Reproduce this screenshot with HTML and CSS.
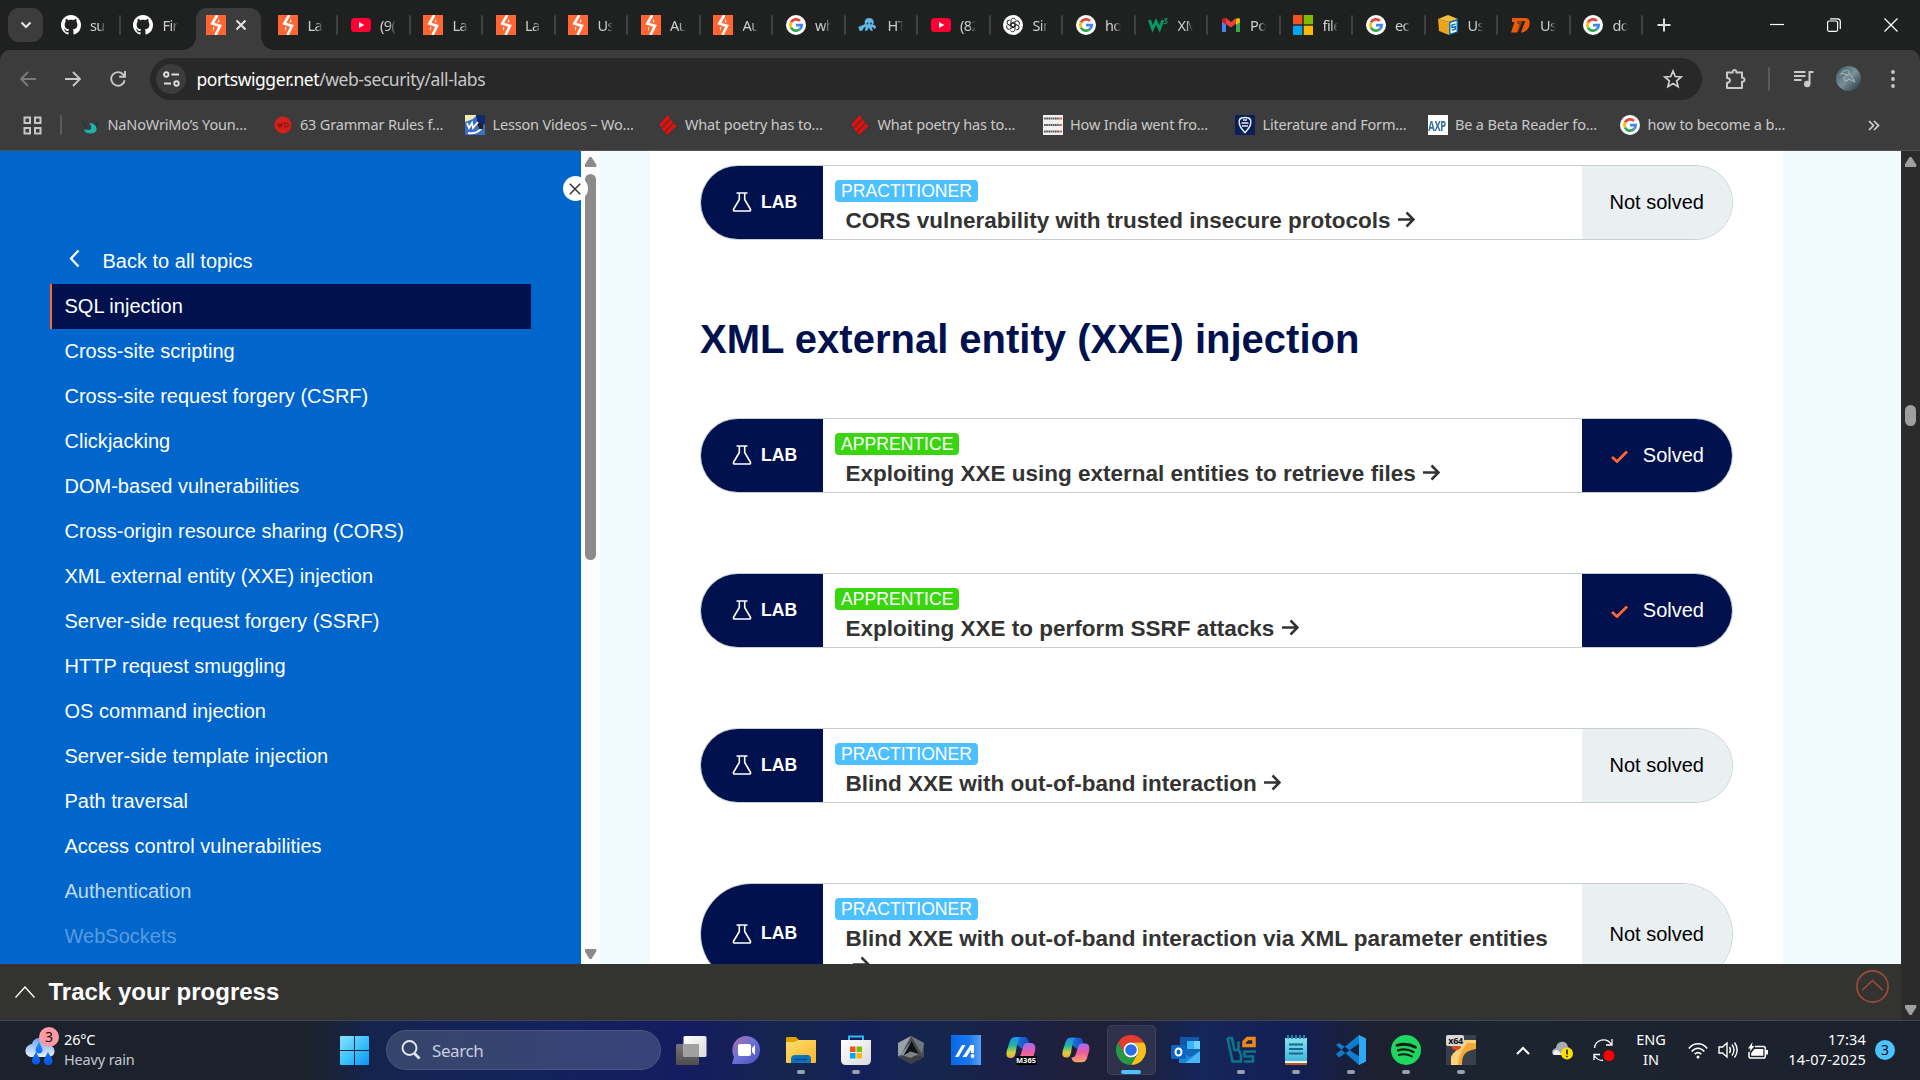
FILE: index.html
```html
<!DOCTYPE html>
<html lang="en">
<head>
<meta charset="utf-8">
<title>All labs | Web Security Academy</title>
<link rel="stylesheet" href="styles.css">
</head>
<body>
<svg class="defs" width="0" height="0" aria-hidden="true">
  <defs>
    <linearGradient id="winG" x1="0" y1="0" x2="1" y2="1"><stop offset="0" stop-color="#8ae3ff"/><stop offset=".5" stop-color="#3fc4fb"/><stop offset="1" stop-color="#0a93f5"/></linearGradient>
    <linearGradient id="cloudG" x1="0" y1="0" x2="0" y2="1"><stop offset="0" stop-color="#6aa5ff"/><stop offset="1" stop-color="#e9effc"/></linearGradient>
    <linearGradient id="dropG" x1="0" y1="0" x2="0" y2="1"><stop offset="0" stop-color="#1d8dff"/><stop offset="1" stop-color="#0653e6"/></linearGradient>
    <linearGradient id="greyG" x1="0" y1="0" x2="0" y2="1"><stop offset="0" stop-color="#777"/><stop offset="1" stop-color="#4d4d4d"/></linearGradient>
    <linearGradient id="whiteG" x1="0" y1="0" x2="1" y2="1"><stop offset="0" stop-color="#fff"/><stop offset="1" stop-color="#d9d9de"/></linearGradient>
    <linearGradient id="chatG" x1="0" y1="0" x2="1" y2="1"><stop offset="0" stop-color="#b768a8"/><stop offset=".45" stop-color="#6d72d4"/><stop offset="1" stop-color="#4a52c4"/></linearGradient>
    <linearGradient id="foldG" x1="0" y1="0" x2="1" y2="1"><stop offset="0" stop-color="#ffdc6e"/><stop offset="1" stop-color="#fbb92c"/></linearGradient>
    <linearGradient id="copA" x1="0" y1="0" x2="0" y2="1"><stop offset="0" stop-color="#1d8ef0"/><stop offset=".4" stop-color="#22b5a0"/><stop offset=".75" stop-color="#d6d33a"/><stop offset="1" stop-color="#f5a53c"/></linearGradient>
    <linearGradient id="copB" x1="0" y1="0" x2="0" y2="1"><stop offset="0" stop-color="#a26bf3"/><stop offset=".5" stop-color="#ef5c9c"/><stop offset="1" stop-color="#fca463"/></linearGradient>
    <linearGradient id="copC" x1="0" y1="0" x2="1" y2="0"><stop offset="0" stop-color="#1c7ae8"/><stop offset="1" stop-color="#1546b4"/></linearGradient>
    <linearGradient id="asusG" x1="0" y1="0" x2="1" y2="0"><stop offset="0" stop-color="#0768e6"/><stop offset=".6" stop-color="#1a78ea"/><stop offset="1" stop-color="#5d9ff2"/></linearGradient>
    <linearGradient id="noteG" x1="0" y1="0" x2="0" y2="1"><stop offset="0" stop-color="#86dff2"/><stop offset="1" stop-color="#3db7da"/></linearGradient>
    <linearGradient id="avG" x1="0" y1="0" x2="1" y2="1"><stop offset="0" stop-color="#3d5963"/><stop offset=".5" stop-color="#7b9098"/><stop offset="1" stop-color="#1d2f38"/></linearGradient>
  </defs>
  <symbol id="github" viewBox="0 0 16 16"><path fill="#fff" d="M8 0C3.58 0 0 3.58 0 8c0 3.54 2.29 6.53 5.47 7.59.4.07.55-.17.55-.38 0-.19-.01-.82-.01-1.49-2.01.37-2.53-.49-2.69-.94-.09-.23-.48-.94-.82-1.13-.28-.15-.68-.52-.01-.53.63-.01 1.08.58 1.23.82.72 1.21 1.87.87 2.33.66.07-.52.28-.87.51-1.07-1.78-.2-3.64-.89-3.64-3.95 0-.87.31-1.59.82-2.15-.08-.2-.36-1.02.08-2.12 0 0 .67-.21 2.2.82.64-.18 1.32-.27 2-.27s1.36.09 2 .27c1.53-1.04 2.2-.82 2.2-.82.44 1.1.16 1.92.08 2.12.51.56.82 1.27.82 2.15 0 3.07-1.87 3.75-3.65 3.95.29.25.54.73.54 1.48 0 1.07-.01 1.93-.01 2.2 0 .21.15.46.55.38A8.01 8.01 0 0 0 16 8c0-4.42-3.58-8-8-8z"/></symbol>
  <symbol id="ps" viewBox="0 0 20 20"><path fill="#f63" d="M0 0h20v20H0z"/><path fill="none" stroke="#fff" stroke-width="2.600" d="M11.300 0 6.300 8.600 14 10.900 9.500 20"/><path fill="#fff" d="M13 3.500 11.500 7l1.800.5zM7 12l1.500.5L7 16z"/></symbol>
  <symbol id="yt" viewBox="0 0 20 20"><rect y="3" width="20" height="14" rx="3.600" fill="#ff0033"/><path fill="#fff" d="m8 7 5.300 3L8 13z"/></symbol>
  <symbol id="google" viewBox="0 0 20 20"><circle cx="10" cy="10" r="10" fill="#fff"/><g fill="none" stroke-width="2.700"><path stroke="#ea4335" d="M14 5.900A5.700 5.700 0 0 0 5 7.300"/><path stroke="#fbbc04" d="M5 7.300a5.700 5.700 0 0 0 0 5.400"/><path stroke="#34a853" d="M5 12.700a5.700 5.700 0 0 0 8.700 1.600"/><path stroke="#4285f4" d="M13.700 14.300a5.700 5.700 0 0 0 2-4.100H10"/></g></symbol>
  <symbol id="octo" viewBox="0 0 20 20"><path fill="#5fb8e6" d="M11 3c4 0 6 3.500 4 7 2 0 3 .5 3 3l-2 1c-.3-1.500-1-2-2.300-1.700L15 16l-2.500-.5-1.700-3-1.300 3L7 16l.5-4c-1.500 0-2 1.500-3 3.500L1.500 16 .3 12c1.500-.5 3-1.500 4.700-2l2-1C6 6 7.500 3 11 3z"/><circle cx="9.500" cy="8.500" r="1" fill="#1d3b4d"/><circle cx="13" cy="8.500" r="1" fill="#1d3b4d"/></symbol>
  <symbol id="gpt" viewBox="0 0 20 20"><circle cx="10" cy="10" r="10" fill="#fff"/><g fill="none" stroke="#222" stroke-width="1"><g id="petal"><path d="M8 7.200V5.600C8 3 11.400 2.500 12.700 4.600M8 7.200v3.900l3.300 1.900"/></g><use href="#petal" transform="rotate(60 10 10)"/><use href="#petal" transform="rotate(120 10 10)"/><use href="#petal" transform="rotate(180 10 10)"/><use href="#petal" transform="rotate(240 10 10)"/><use href="#petal" transform="rotate(300 10 10)"/></g></symbol>
  <symbol id="w3" viewBox="0 0 20 20"><path fill="none" stroke="#059862" stroke-width="2.900" d="m1.400 5 3.200 9L8 6.500l3.600 7.500 3.200-9"/><path fill="none" stroke="#059862" stroke-width="1.100" d="M16 3.700h3l-1.700 2c2.500 0 2 2.900-.2 2.800l-1.100-.5"/></symbol>
  <symbol id="gmail" viewBox="0 0 20 20"><path fill="#4285f4" d="M1 5v12h4V9z"/><path fill="#34a853" d="M19 5v12h-4V9z"/><path fill="#ea4335" d="M1 5.200 5 3l5 4 5-4v5.500L10 12.500 1 6.500z"/><path fill="#fbbc04" d="M15 4.200c2-2 4-1 4 1V7l-4 3z"/><path fill="#c5221f" d="M1 5.200C1 3.200 3.500 2.200 5 4v5.500L1 6.800z"/></symbol>
  <symbol id="ms" viewBox="0 0 20 20"><path fill="#f25022" d="M0 0h9.300v9.300H0z"/><path fill="#7fba00" d="M10.700 0H20v9.300h-9.300z"/><path fill="#00a4ef" d="M0 10.700h9.300V20H0z"/><path fill="#ffb900" d="M10.700 10.700H20V20h-9.300z"/></symbol>
  <symbol id="box" viewBox="0 0 20 20"><path fill="#f5bd3d" d="m0 4 10-4 10 4-9 3z"/><path fill="#eba41c" d="m0 4 11 3v13L1 16z"/><path fill="#0b75bd" d="m11 7 9-3v13l-9 3z"/><path fill="#fff" d="m12.500 8 6-2v10.500l-6 2z"/><path fill="none" stroke="#0b75bd" stroke-width="1.500" d="m17.500 9-3.500 1v2.500l3.300-.8v2.500l-3.500 1"/></symbol>
  <symbol id="seven" viewBox="0 0 20 20"><path fill="#eb5a0c" d="M1 3h13c3.500 0 5 2 4.700 6-.4 4.500-3 8-8.700 8.500l1.500-4.500 2-6.500H9L6 17.500H0L3.500 7H1z"/><path fill="#1f2020" d="M6.500 6.300h7.800L11 13.500l-1.500 2H7.200l3-6.500H6z"/><path fill="#eb5a0c" d="m7 6.300 4.500 0-4.500 11H1z" opacity=".55"/></symbol>
  <symbol id="dragon" viewBox="0 0 20 20"><path fill="#24383f" d="m0 4 7 6v5zM20 3l-6 8 2 5z"/><path fill="#1fb5ae" d="M9 8c5 0 8 3 7.500 7-.5 4-9 4.500-11.500 1.500L4 14.500l5 .5c3 0 3-4 0-7z"/></symbol>
  <symbol id="wd" viewBox="0 0 20 20"><circle cx="10" cy="10" r="8.500" fill="#d32119"/><path fill="none" stroke="#8a1611" stroke-width="1.100" d="m4.500 8 1.200 4 1.300-3 1.300 3 1.200-4m2 0v4c5 1 5-5 0-4"/></symbol>
  <symbol id="lesson" viewBox="0 0 20 20"><path fill="#3d6fc0" d="M0 0h20v20H0z"/><path fill="#f0e9b8" d="M0 0h12L8 4 0 7z"/><path fill="#102a70" d="M11 0h9v9l-7 2z"/><path stroke="#fff" stroke-width="1.800" fill="none" d="m2 8 2 5 3-5 1 5 5-6M3 18c7 1 10-1 14-5"/><path fill="#2a1a18" d="M13 9h5v5h-4z"/></symbol>
  <symbol id="poetry" viewBox="0 0 20 20"><path fill="#f00a0a" d="M9.800.3 12 3.300 3.300 12.500 1.500 9.500zM13 4.500l2 3L6 17l-2-3.500zM16.200 8.200l2 2.800-8.700 8.700-2-2.500z"/></symbol>
  <symbol id="india" viewBox="0 0 20 20"><path fill="#f3f1f0" d="M0 0h20v20H0z"/><g stroke-width="2.200" stroke-dasharray="1.700 .5"><path stroke="#555" d="M1 3.500h14M1 10h14M1 16.500h14"/><path stroke="#b55" d="M15 3.500h4M15 10h4M15 16.500h4"/></g></symbol>
  <symbol id="lit" viewBox="0 0 20 20"><path fill="#0b1f57" d="M0 0h20v20H0z"/><path fill="none" stroke="#e8ecf5" stroke-width="1.500" d="M10 2.500c6 0 6.500 3 5.500 7-.8 3.500-3 5-5.500 8-2.500-3-4.700-4.500-5.500-8-1-4-.5-7 5.500-7zM6.500 8h7M7 11h6M8 5h4"/></symbol>
  <symbol id="lab" viewBox="0 0 20 20"><path fill="none" stroke="#fff" stroke-width="1.600" stroke-linejoin="round" d="M4.500 1h11M7.300 1v6.500L1.700 17c-.7 1.300 0 2 1 2h14.600c1 0 1.700-.7 1-2l-5.600-9.500V1"/></symbol>
  <symbol id="arrow" viewBox="0 0 17 17"><path fill="none" stroke="#333332" stroke-width="2.500" d="M0 8.500h15M8.500 1.500l7 7-7 7"/></symbol>
  <symbol id="copilot" viewBox="0 0 30 30"><path fill="url(#copC)" d="M9 2h9c3 0 4 2 5 5l1 3h-6l-2 4-7-6z"/><path fill="url(#copA)" d="M9 2h5c-2 2-3 8-4 14-.8 5-2 7-5 7H4c-4 0-4-4-3-8l3-9c1-3 3-4 5-4z"/><path fill="url(#copB)" d="M21 28h-6c-3 0-4-2-5-5 3 0 4-1 5-4l2-7c.7-2.500 2-4 4-4h4c4 0 5 4 4 8l-2 7c-1.200 4-3 5-6 5z"/></symbol>
</svg>

<header class="tabs">
  <button class="tab-search"><svg width="12" height="12" viewBox="0 0 12 12"><path d="m1.500 3.500 4.500 4.500 4.500-4.500" fill="none" stroke="#e3e3e3" stroke-width="2.200"/></svg></button>
  <div class="strip">
    <div class="tab"><svg><use href="#github"/></svg><span>su</span></div>
    <div class="tab nosep"><svg><use href="#github"/></svg><span>Fir</span></div>
    <div class="tab active nosep"><svg><use href="#ps"/></svg><svg class="x" viewBox="0 0 12 12"><path d="m1.500 1.500 9 9m0-9-9 9" stroke="#e3e3e3" stroke-width="2"/></svg></div>
    <div class="tab"><svg><use href="#ps"/></svg><span>La</span></div>
    <div class="tab"><svg><use href="#yt"/></svg><span>(9(</span></div>
    <div class="tab"><svg><use href="#ps"/></svg><span>La</span></div>
    <div class="tab"><svg><use href="#ps"/></svg><span>La</span></div>
    <div class="tab"><svg><use href="#ps"/></svg><span>Us</span></div>
    <div class="tab"><svg><use href="#ps"/></svg><span>Au</span></div>
    <div class="tab"><svg><use href="#ps"/></svg><span>Au</span></div>
    <div class="tab"><svg><use href="#google"/></svg><span>wh</span></div>
    <div class="tab"><svg><use href="#octo"/></svg><span>HT</span></div>
    <div class="tab"><svg><use href="#yt"/></svg><span>(82</span></div>
    <div class="tab"><svg><use href="#gpt"/></svg><span>Sin</span></div>
    <div class="tab"><svg><use href="#google"/></svg><span>ho</span></div>
    <div class="tab"><svg><use href="#w3"/></svg><span>XM</span></div>
    <div class="tab"><svg><use href="#gmail"/></svg><span>Po</span></div>
    <div class="tab"><svg><use href="#ms"/></svg><span>file</span></div>
    <div class="tab"><svg><use href="#google"/></svg><span>ec</span></div>
    <div class="tab"><svg><use href="#box"/></svg><span>Us</span></div>
    <div class="tab"><svg><use href="#seven"/></svg><span>Us</span></div>
    <div class="tab"><svg><use href="#google"/></svg><span>do</span></div>
  </div>
  <svg class="newtab" width="14" height="14" viewBox="0 0 14 14"><path d="M7 .5v13M.5 7h13" stroke="#dcdcdc" stroke-width="2"/></svg>
  <div class="winbtns">
    <svg width="14" height="14" viewBox="0 0 14 14"><path d="M0 6.500h14" stroke="#fff" stroke-width="1.200"/></svg>
    <svg width="14" height="14" viewBox="0 0 14 14" fill="none" stroke="#fff" stroke-width="1.200"><rect x=".6" y="3" width="10" height="10.300" rx="1.500"/><path d="M3 .8h7.500c2 0 2.800 1 2.800 2.800V11"/></svg>
    <svg width="14" height="14" viewBox="0 0 14 14"><path d="m.5.500 13 13m0-13-13 13" stroke="#fff" stroke-width="1.300"/></svg>
  </div>
</header>

<div class="toolbar">
  <nav class="navbtns">
    <svg width="16" height="16" viewBox="0 0 16 16"><path d="M16 8H1.500M8 1 1 8l7 7" fill="none" stroke="#7b7b7b" stroke-width="1.900"/></svg>
    <svg width="16" height="16" viewBox="0 0 16 16"><path d="M0 8h14.500M8 1l7 7-7 7" fill="none" stroke="#c9c9c9" stroke-width="1.900"/></svg>
    <svg width="16" height="16" viewBox="0 0 16 16"><path d="M14.700 9.300A6.800 6.800 0 1 1 13 3.300l1.800 1.700M15 0v5.800H9.200" fill="none" stroke="#c9c9c9" stroke-width="1.900"/></svg>
  </nav>
  <div class="omnibox">
    <span class="site"><svg width="17" height="16" viewBox="0 0 17 16" fill="none" stroke="#dedede" stroke-width="1.900"><circle cx="3.200" cy="3.500" r="2.200"/><path d="M8.500 3.500H16M1 12.500h7"/><circle cx="13.500" cy="12.500" r="2.200"/></svg></span>
    <span class="url"><b>portswigger.net</b>/web-security/all-labs</span>
    <svg class="star" width="20" height="20" viewBox="0 0 20 20"><path d="m10 2 2.300 5.500 5.900.5-4.500 3.900 1.400 5.800-5.100-3.100-5.100 3.100 1.400-5.800L1.800 8l5.900-.5z" fill="none" stroke="#d0d0d0" stroke-width="1.700"/></svg>
  </div>
  <div class="actions">
    <svg width="22" height="22" viewBox="0 0 22 22"><path d="M2 4.500h5.800c-.6-3.500 4-3.500 3.600 0H17v5.300c3.400-.5 3.400 4.400 0 3.900V20H2v-5.300c4 .3 4-5 0-4.700z" fill="none" stroke="#c9c9c9" stroke-width="2" stroke-linejoin="round"/></svg>
    <i class="bar"></i>
    <svg width="20" height="18" viewBox="0 0 20 18"><path d="M0 2h11.500M0 6h11.500M0 10h7.500" stroke="#c9c9c9" stroke-width="2"/><path d="M15.500 14V2h4" stroke="#c9c9c9" stroke-width="2" fill="none"/><circle cx="13.200" cy="14" r="3.200" fill="#c9c9c9"/></svg>
    <svg width="25" height="25" viewBox="0 0 25 25"><circle cx="12.500" cy="12.500" r="12.500" fill="url(#avG)"/><path d="M4 9c3-5 8-6 9-3s-4 3-5 6 3 4 5 1l6 3M5 7l7 2M12 8c3 0 4 3 7 8" fill="none" stroke="#a9bbc0" stroke-width="1"/></svg>
    <svg width="4" height="18" viewBox="0 0 4 18" fill="#c9c9c9"><circle cx="2" cy="2" r="1.900"/><circle cx="2" cy="9" r="1.900"/><circle cx="2" cy="16" r="1.900"/></svg>
  </div>
</div>

<div class="bookmarks">
  <svg class="apps" width="19" height="19" viewBox="0 0 19 19" fill="none" stroke="#c7c7c7" stroke-width="2"><path d="M1.500 1.500h5.500v5.500H1.500zM12 1.500h5.500v5.500H12zM1.500 12h5.500v5.500H1.500zM12 12h5.500v5.500H12z"/></svg>
  <i class="bar"></i>
  <div class="marks">
    <a><svg><use href="#dragon"/></svg><span>NaNoWriMo’s Youn...</span></a>
    <a><svg><use href="#wd"/></svg><span>63 Grammar Rules f...</span></a>
    <a><svg><use href="#lesson"/></svg><span>Lesson Videos – Wo...</span></a>
    <a><svg><use href="#poetry"/></svg><span>What poetry has to...</span></a>
    <a><svg><use href="#poetry"/></svg><span>What poetry has to...</span></a>
    <a><svg><use href="#india"/></svg><span>How India went fro...</span></a>
    <a><svg><use href="#lit"/></svg><span>Literature and Form...</span></a>
    <a><b class="axp"><i>AXP</i></b><span>Be a Beta Reader fo...</span></a>
    <a><svg><use href="#google"/></svg><span>how to become a b...</span></a>
  </div>
  <svg class="more" width="12" height="11" viewBox="0 0 12 11"><path d="m1 1 4.500 4.500L1 10M6 1l4.500 4.500L6 10" fill="none" stroke="#d0d0d0" stroke-width="1.700"/></svg>
</div>

<div class="viewport">
  <div class="page">
    <div class="main">
      <aside class="side">
        <button class="close"><svg width="12" height="12" viewBox="0 0 12 12"><path d="m.8.800 10.400 10.400m0-10.400L.8 11.200" stroke="#333" stroke-width="1.500"/></svg></button>
        <a class="back"><svg width="11" height="19" viewBox="0 0 11 19"><path d="M9.500 1.500 2 9.500l7.500 8" fill="none" stroke="#fff" stroke-width="2.300"/></svg>Back to all topics</a>
        <a class="topic current">SQL injection</a>
        <a class="topic">Cross-site scripting</a>
        <a class="topic">Cross-site request forgery (CSRF)</a>
        <a class="topic">Clickjacking</a>
        <a class="topic">DOM-based vulnerabilities</a>
        <a class="topic">Cross-origin resource sharing (CORS)</a>
        <a class="topic">XML external entity (XXE) injection</a>
        <a class="topic">Server-side request forgery (SSRF)</a>
        <a class="topic">HTTP request smuggling</a>
        <a class="topic">OS command injection</a>
        <a class="topic">Server-side template injection</a>
        <a class="topic">Path traversal</a>
        <a class="topic">Access control vulnerabilities</a>
        <a class="topic fade1">Authentication</a>
        <a class="topic fade2">WebSockets</a>
      </aside>
      <div class="scroll light"><i class="up"></i><i class="thumb"></i><i class="down"></i></div>
      <section class="content">
        <article class="card">
          <div class="kind"><svg><use href="#lab"/></svg>LAB</div>
          <div class="info"><span class="tag practitioner">PRACTITIONER</span><h3>CORS vulnerability with trusted insecure protocols<svg><use href="#arrow"/></svg></h3></div>
          <div class="status">Not solved</div>
        </article>
        <h2>XML external entity (XXE) injection</h2>
        <article class="card">
          <div class="kind"><svg><use href="#lab"/></svg>LAB</div>
          <div class="info"><span class="tag apprentice">APPRENTICE</span><h3>Exploiting XXE using external entities to retrieve files<svg><use href="#arrow"/></svg></h3></div>
          <div class="status solved"><svg viewBox="0 0 17 13"><path d="m1 7 5 4.500L16 1.500" fill="none" stroke="#f63" stroke-width="2.800"/></svg>Solved</div>
        </article>
        <article class="card">
          <div class="kind"><svg><use href="#lab"/></svg>LAB</div>
          <div class="info"><span class="tag apprentice">APPRENTICE</span><h3>Exploiting XXE to perform SSRF attacks<svg><use href="#arrow"/></svg></h3></div>
          <div class="status solved"><svg viewBox="0 0 17 13"><path d="m1 7 5 4.500L16 1.500" fill="none" stroke="#f63" stroke-width="2.800"/></svg>Solved</div>
        </article>
        <article class="card">
          <div class="kind"><svg><use href="#lab"/></svg>LAB</div>
          <div class="info"><span class="tag practitioner">PRACTITIONER</span><h3>Blind XXE with out-of-band interaction<svg><use href="#arrow"/></svg></h3></div>
          <div class="status">Not solved</div>
        </article>
        <article class="card tall">
          <div class="kind"><svg><use href="#lab"/></svg>LAB</div>
          <div class="info"><span class="tag practitioner">PRACTITIONER</span><h3>Blind XXE with out-of-band interaction via XML parameter entities<svg><use href="#arrow"/></svg></h3></div>
          <div class="status">Not solved</div>
        </article>
      </section>
    </div>
    <footer class="track">
      <svg width="20" height="12" viewBox="0 0 20 12"><path d="m.5 11.500 9.500-10.500 9.500 10.500" fill="none" stroke="#fff" stroke-width="1.300"/></svg>
      <strong>Track your progress</strong>
      <svg class="totop" width="33" height="33" viewBox="0 0 33 33" fill="none" stroke="#a24d31" stroke-width="1.600"><circle cx="16.500" cy="16.500" r="15.600"/><path d="m6.500 20 10-9.500 10 9.500"/></svg>
    </footer>
  </div>
  <div class="scroll dark"><i class="up"></i><i class="thumb"></i><i class="down"></i></div>
</div>

<footer class="taskbar">
  <div class="weather">
    <div class="wicon"><svg width="30" height="32" viewBox="0 0 30 32"><path fill="url(#cloudG)" d="M7 11c2-8 14-8 16 1 8 0 9 11 1 12H6c-8-1-7-12 1-13z"/><path fill="url(#dropG)" d="M14 9c2 4 3.500 6 3.500 8a3.500 3.500 0 0 1-7 0c0-2 1.500-4 3.500-8zM11 19c2 4 4 6 4 8.500a4 4 0 0 1-8 0C7 25 9 23 11 19zM23 19c2 4 4.500 6 4.500 9a4.300 4.300 0 0 1-8.600 0c0-3 2-5 4.100-9z"/></svg><b>3</b></div>
    <p>26°C<br><em>Heavy rain</em></p>
  </div>
  <div class="apps-row">
    <div class="app start"><svg width="29" height="29" viewBox="0 0 29 29" fill="url(#winG)"><path d="M1 0h13v14H0V1q0-1 1-1zM15 0h13q1 0 1 1v13H15zM0 15h14v14H1q-1 0-1-1zM15 15h14v13q0 1-1 1H15z"/></svg></div>
    <div class="search"><svg width="20" height="20" viewBox="0 0 20 20" fill="none" stroke="#e6e8f0"><circle cx="8.500" cy="8" r="7" stroke-width="1.900"/><path d="m13.500 13.500 5 5" stroke-width="2.600"/></svg>Search</div>
    <div class="app"><svg width="31" height="29" viewBox="0 0 31 29"><rect y="8" width="23" height="21" rx="1.500" fill="url(#greyG)"/><rect x="7.500" width="23" height="21" rx="1.500" fill="url(#whiteG)"/><path fill="#a0a0a0" d="M7.500 8H23v13H7.500z"/></svg></div>
    <div class="app"><svg width="30" height="30" viewBox="0 0 30 30"><path fill="url(#chatG)" d="M15 1a14 14 0 1 1 0 28H1l2-7C-2 12 5 1 15 1z"/><rect x="7" y="9" width="13" height="12" rx="2" fill="#fff"/><path fill="#fff" d="m21 13 3-3v10l-3-3z"/></svg></div>
    <div class="app open"><svg width="31" height="28" viewBox="0 0 31 28"><path fill="#e0a100" d="M1 1h9l3 3h-1L8 8H0V2z"/><path fill="url(#foldG)" d="M0 6h8l4-2h18v22q0 1-1 1H1q-1 0-1-1z"/><path fill="#0f72bd" d="M5 27v-4q0-4 4-4h12q4 0 4 4v4z"/><path stroke="#0a4b86" stroke-width="1.500" d="M9 23.500h12"/></svg></div>
    <div class="app open"><svg width="30" height="30" viewBox="0 0 30 30"><path fill="none" stroke="#2bbdf0" stroke-width="2" d="M8 6V1.500h14V6"/><path fill="url(#whiteG)" d="M0 5h30v20q0 5-5 5H5q-5 0-5-5z"/><path fill="#f25022" d="M9 11.500h5.500V17H9z"/><path fill="#7fba00" d="M15.500 11.500H21V17h-5.500z"/><path fill="#00a4ef" d="M9 18h5.500v5.500H9z"/><path fill="#ffb900" d="M15.500 18H21v5.500h-5.500z"/></svg></div>
    <div class="app"><svg width="28" height="30" viewBox="0 0 28 30"><path fill="#474c53" d="m14 1 13 7v14l-13 7-13-7V8z"/><path fill="#70767e" d="m14 1 13 7-2 11z"/><path fill="#9aa0a8" d="m14 1-13 7v13l3-1z"/><path fill="#3b3f45" d="m1 22 4-1h17l5 1-13 7z"/><path fill="#0e1012" d="m14.500 6 7 13-8-2.500-7 4z"/><path fill="#8d939b" d="m14.500 6-11 14 3 .5z"/><path fill="#7d838b" d="m6.500 20.500 7-4 8 2.500-8 4z"/></svg></div>
    <div class="app"><svg width="30" height="30" viewBox="0 0 30 30"><path fill="url(#asusG)" d="M0 0h30v30H0z"/><path fill="#fff" d="m4 22 7-12h3.500L7.500 22zM11.500 22l8-12h3.500v8h-3v-3l-4.500 7z"/><circle cx="21.500" cy="21" r="1.900" fill="#fff"/></svg></div>
    <div class="app"><svg width="30" height="30" viewBox="0 0 30 30"><use href="#copilot"/></svg><b class="m365">M365</b></div>
    <div class="app"><svg width="28" height="28" viewBox="0 0 30 30"><use href="#copilot"/></svg></div>
    <div class="app focus"><svg width="30" height="30" viewBox="0 0 30 30"><path fill="#e33b2e" d="M2 7.500a15 15 0 0 1 26 0H15a7.500 7.500 0 0 0-6.500 11.200z"/><path fill="#fbc116" d="M28 7.500A15 15 0 0 1 15 30l6.500-11.200A7.500 7.500 0 0 0 15 7.500z"/><path fill="#279847" d="M2 7.500 8.500 18.700A7.500 7.500 0 0 0 21.500 18.700L15 30A15 15 0 0 1 2 7.500z"/><circle cx="15" cy="15" r="7.500" fill="#fff"/><circle cx="15" cy="15" r="5.800" fill="#2b6de9"/></svg></div>
    <div class="app"><svg width="30" height="28" viewBox="0 0 30 28"><path fill="#0f5aa8" d="M9 1h19v12H9z"/><path fill="#38b6f5" d="M16 5h7v8h-7z"/><path fill="#6bd4ff" d="M23 5h6v8h-6z"/><path fill="#1b86dc" d="M8 13h21v14H8z"/><path fill="#1464b8" d="m8 14 11 7 10-6v-2H8z"/><path fill="#48b4f2" d="m29 15-15 12h15z"/><rect y="9" width="15" height="14" rx="1.500" fill="#0c65be"/><ellipse cx="7.500" cy="16" rx="3" ry="3.500" fill="none" stroke="#fff" stroke-width="2"/></svg></div>
    <div class="app open"><svg width="30" height="28" viewBox="0 0 30 28" fill="none" stroke-width="2.600"><path stroke="#0c7686" d="M1.500 2H6l2.500 12h4V5.500M1.500 2l5 23.500H15V19l-2-4.500M30 15.500H18.500v5H27v5h-9"/><path stroke="#f08a14" stroke-width="3.500" d="M18 9.500V6l3.500-3.500H28v7z"/></svg></div>
    <div class="app open"><svg width="24" height="30" viewBox="0 0 24 30"><path fill="url(#noteG)" d="M1 3h22v24H1z"/><path fill="#f0f0ee" d="M1 26h22v2H1z"/><path fill="#b35a1e" d="M1 28h22v2H1z"/><path stroke="#17698a" stroke-width="2" d="M5 9.500h14M5 14h14M5 18.500h14"/><path stroke="#2a8fb0" stroke-width="1.800" d="M4 0v4M8 0v4M12 0v4M16 0v4M20 0v4"/></svg></div>
    <div class="app open"><svg width="31" height="30" viewBox="0 0 31 30"><path fill="#0f7dcc" d="M23 0 0 19l3 3.500L24 8zM0 10l3-2 21 14-1 8z"/><path fill="#2da8f5" d="m23 0 7 3.500v23L23 30z"/></svg></div>
    <div class="app open"><svg width="30" height="30" viewBox="0 0 30 30"><circle cx="15" cy="15" r="15" fill="#1ed760"/><g fill="none" stroke="#121c16" stroke-linecap="round"><path stroke-width="2.800" d="M6 10.300c6-1.700 13-1.200 18.500 1.900"/><path stroke-width="2.300" d="M7 15.300c5-1.400 11-.9 15.500 1.700"/><path stroke-width="2" d="M7.800 19.900c4.500-1.100 9-.7 13 1.500"/></g></svg></div>
    <div class="app open"><svg width="30" height="30" viewBox="0 0 30 30"><path fill="#3a404a" d="M0 0h30v30H0z"/><path fill="#f5a73a" d="M30 5H20c-3 0-4 1-6 4-2 8-8 8-9 14v7h11c0-8 2-12 7-14 3-1 5-2 7-2z"/><path fill="#fbd27a" d="M30 5v3h-9c-3 5-8 10-9 22H5v-7c1-6 7-6 9-13 2-4 4-5 6-5z"/><path fill="#df4a1a" d="M5 11h10c0 5-8 6-10 0z"/><rect width="18" height="11" rx="2" fill="#d8d8d6"/></svg><b class="x64">x64</b></div>
  </div>
  <div class="tray">
    <svg width="14" height="9" viewBox="0 0 14 9"><path d="m1 8 6-6 6 6" fill="none" stroke="#fff" stroke-width="2"/></svg>
    <svg width="22" height="19" viewBox="0 0 22 19"><path fill="#a9abb0" d="M4 7c1-8 11-8 12-1 4 1 4 8 0 8H3c-4 0-4-6 1-7z"/><path fill="#f1f1f3" d="M1 13c0-5 6-5 7-1l3 2H3q-2 0-2-1z"/><circle cx="15" cy="12.500" r="6" fill="#ffe100"/><path stroke="#222" stroke-width="1.600" d="M15 8.500v5M15 14.700v1.600"/></svg>
    <svg width="22" height="24" viewBox="0 0 22 24"><path d="M1.500 10A9 9 0 0 1 18 6M19 1v6h-6M1 22v-5.500h6M1.500 18c2 3 5 4.500 8.500 4.500" fill="none" stroke="#fff" stroke-width="1.300"/><circle cx="16" cy="17.500" r="5.500" fill="red"/></svg>
    <p class="lang">ENG<br>IN</p>
    <svg width="20" height="17" viewBox="0 0 20 17" fill="none" stroke="#fff" stroke-width="1.600"><path d="M.8 6.500C6 .2 14 .2 19.200 6.500M3.700 9.500c3.700-4.300 8.900-4.300 12.600 0M6.700 12.300c2-2.200 4.600-2.200 6.600 0"/><circle cx="10" cy="15" r="1.500" fill="#fff" stroke="none"/></svg>
    <svg width="20" height="18" viewBox="0 0 20 18" fill="none" stroke="#fff" stroke-width="1.400"><path d="M1 6h3.500L9 2v14l-4.500-4H1zM11.500 6c1.300 2 1.300 4 0 6M14 3.500c2.500 3.500 2.500 7.500 0 11M16.500 1.500c3.500 4.500 3.500 10.500 0 15"/></svg>
    <svg width="20" height="17" viewBox="0 0 20 17"><path d="M7 4.500h8.500q1.800 0 1.800 1.800v7.900q0 1.800-1.800 1.800H2.800Q1 16 1 14.200V10" fill="none" stroke="#fff" stroke-width="1.500"/><path fill="#fff" d="M6.500 7h8.800v6.800H3.200V11zM18 8h2v4.500h-2zM4.500 0 0 6.500h2.500L1.500 10 6.500 4H4z"/></svg>
    <p class="clock">17:34<br>14-07-2025</p>
    <b class="count">3</b>
  </div>
</footer>
</body>
</html>
```
FILE: styles.css
```css
* { box-sizing: border-box; }
body {
  margin: 0; width: 1920px; height: 1080px; overflow: hidden;
  display: flex; flex-direction: column; background: #1f2121;
  font-family: "Noto Sans", "Open Sans", sans-serif; color: #fff;
}
p { margin: 0; }
em { font-style: normal; }
button { border: 0; padding: 0; display: grid; place-items: center; }
svg { flex: none; display: block; }
.defs { position: absolute; }

/* tab strip */
.tabs { height: 50px; flex: none; display: flex; align-items: center; padding-left: 8px; background: #1f2121; }
.tab-search { width: 35px; height: 34px; border-radius: 11px; background: #3c3c3c; }
.strip { display: flex; align-self: stretch; margin-left: 5px; }
.tab { width: 72.5px; display: flex; align-items: center; padding-left: 12.500px; gap: 9.500px; position: relative; }
.tab > svg { width: 20px; height: 20px; }
.tab span {
  width: 15.500px; overflow: hidden; white-space: nowrap; font-size: 14.500px; letter-spacing: -.6px; color: #cfcfcf;
  -webkit-mask-image: linear-gradient(90deg, #000 55%, transparent); mask-image: linear-gradient(90deg, #000 55%, transparent);
}
.tab::after { content: ""; position: absolute; right: 0; top: 15px; width: 2px; height: 20px; background: #404242; border-radius: 1px; }
.tab.nosep::after { display: none; }
.tab.active { background: #3c3c3c; width: 65px; margin: 8px 4.500px 0 3px; padding: 0 0 8px 10px; border-radius: 11px 11px 0 0; gap: 9px; }
.tab.active > .x { width: 12px; height: 12px; margin-left: 0; }
.tab.active::before, .tab.active::after {
  content: ""; display: block; position: absolute; top: auto; bottom: 0; width: 13px; height: 13px; border-radius: 0;
}
.tab.active::before { left: -13px; background: radial-gradient(circle at 0 0, transparent 12.500px, #3c3c3c 13px); }
.tab.active::after { right: -13px; background: radial-gradient(circle at 100% 0, transparent 12.500px, #3c3c3c 13px); }
.newtab { margin-left: 14px; }
.winbtns { margin-left: auto; margin-right: 22px; display: flex; gap: 43px; }

/* address row */
.toolbar { height: 50px; flex: none; display: flex; background: #3c3c3c; border-radius: 10px 10px 0 0; padding: 8px 25px 0 20px; }
.navbtns { display: flex; align-items: center; gap: 29px; width: 130px; padding-bottom: 1px; }
.omnibox { width: 1552px; height: 42px; border-radius: 21px; background: #282828; display: flex; align-items: center; padding: 0 19px 0 6px; }
.site { width: 30px; height: 30px; border-radius: 50%; background: #3c3c3c; display: grid; place-items: center; }
.url { margin-left: 10.500px; font-size: 17.500px; letter-spacing: -.43px; color: #c7c7c7; }
.url b { font-weight: 400; color: #fff; }
.star { margin-left: auto; }
.actions { display: flex; align-items: center; margin-left: auto; padding-bottom: 1px; }
.actions > * + * { margin-left: 21px; }
.bar { width: 2px; height: 24px; background: #5b5b5b; border-radius: 1px; }
.actions > :nth-child(3) { margin-left: 24px; }
.actions > :nth-child(4) { margin-left: 22px; }
.actions > :nth-child(5) { margin-left: 30px; }

/* bookmarks */
.bookmarks { height: 51px; flex: none; display: flex; align-items: center; background: #3c3c3c; border-bottom: 1px solid #515151; padding: 0 40px 0 23px; }
.bookmarks .bar { height: 20px; margin-left: 18px; }
.marks { display: flex; margin-left: 18px; }
.marks a { width: 192.500px; display: flex; align-items: center; gap: 7.500px; }
.marks svg { width: 20px; height: 20px; }
.marks span { font-size: 14.500px; letter-spacing: -.17px; color: #c9c9c9; white-space: nowrap; margin-top: -2px; }
.axp { flex: none; width: 20px; height: 20px; background: #fff; color: #2d6f9f; display: flex; justify-content: center; }
.axp i { flex: none; font: 700 15px/20px "Open Sans", sans-serif; transform: scaleX(.62); letter-spacing: -.5px; }
.more { margin-left: auto; }

/* page frame */
.viewport { height: 869px; flex: none; display: flex; font-family: "Liberation Sans", Arial, sans-serif; }
.page { flex: 1; display: flex; flex-direction: column; background: #f1fafc; }
.main { height: 813px; display: flex; overflow: hidden; }
.scroll { width: 19px; display: flex; flex-direction: column; align-items: center; padding: 6px 0; }
.scroll i { display: block; }
.scroll .up { width: 12px; height: 10px; background: currentColor; clip-path: polygon(42% 0, 58% 0, 100% 80%, 96% 100%, 4% 100%, 0 80%); }
.scroll .down { width: 12px; height: 10px; margin-top: auto; background: currentColor; clip-path: polygon(42% 100%, 58% 100%, 100% 20%, 96% 0, 4% 0, 0 20%); }
.scroll .thumb { width: 11px; border-radius: 6px; background: currentColor; }
.scroll.light { background: #fcfcfc; color: #8b8b8b; padding-bottom: 5px; }
.light .thumb { height: 386px; margin-top: 7px; }
.scroll.dark { background: #2b2b2b; color: #9f9f9f; padding-bottom: 5px; }
.dark .thumb { height: 21px; margin-top: 238px; }

.side { width: 581px; background: #06c; padding: 88px 50px 0; position: relative; font-size: 20px; color: #fff; }
.close { position: absolute; z-index: 2; left: 562.500px; top: 25px; width: 25px; height: 25px; border-radius: 50%; background: #fff; }
.back { height: 45px; display: flex; align-items: center; padding-left: 19px; }
.back svg { margin: -6px 22.500px 0 0; }
.topic { display: flex; align-items: center; height: 45px; padding-left: 12.500px; letter-spacing: .01px; border-left: 2px solid transparent; }
.topic.current { background: #00114d; border-color: #f63; }
.fade1 { color: rgba(255, 255, 255, .75); }
.fade2 { color: rgba(255, 255, 255, .36); }

.content { margin-left: 50px; width: 1133px; background: #fff; padding: 14px 50px 0; }
.card { display: flex; width: 1033px; min-height: 75px; border: 1px solid #c6cfd0; border-radius: 38px; overflow: hidden; margin-bottom: 80px; background: #fff; }
.card.tall { border-radius: 51px; }
.kind { width: 122px; flex: none; background: #00114d; color: #fff; font-weight: 700; font-size: 17.600px; display: flex; align-items: center; padding: 0 0 1px 30.500px; gap: 9.500px; }
.kind svg { width: 20px; height: 20px; }
.info { flex: 1; padding: 14px 20px 5px 12px; color: #333332; }
.tag { display: block; width: max-content; height: 22px; padding: 0 6px; border-radius: 4px; font-size: 17.600px; line-height: 22px; color: #fff; }
.practitioner { background: #4dc0ff; }
.apprentice { background: #39d60f; }
.info h3 { margin: 5px 0 0 10.500px; font-size: 22.500px; line-height: 27px; font-weight: 700; }
.info h3 svg { display: inline-block; width: 17px; height: 17px; margin-left: 7.500px; vertical-align: 0; margin-top: -1px; }
.status { width: 150px; flex: none; background: #eaeff2; color: #000; font-size: 20px; display: flex; align-items: center; justify-content: flex-end; padding-right: 28px; }
.status.solved { background: #00114d; color: #fff; }
.status svg { width: 17px; height: 13px; margin: 1px 15px 0 0; }
h2 { margin: -4px 0 55px; font-size: 40px; line-height: 47px; color: #00114d; }

.track { height: 56px; background: #333332; display: flex; align-items: center; padding: 0 12px 0 15px; }
.track strong { font-size: 24px; margin-left: 13.500px; }
.track .totop { margin: -12px 0 0 auto; }

/* taskbar */
.taskbar {
  height: 60px; flex: none; display: flex; align-items: center; position: relative; border-top: 1px solid #40465a;
  background: linear-gradient(90deg, #1c222c 0, #1c222c 310px, #14244e 370px, #12235a 520px, #151c60 690px, #14264c 790px, #14205a 860px, #14264c 930px, #1a2048 1010px, #1f2038 1090px, #1c2140 1150px, #15265a 1200px, #121f54 1300px, #1c2030 1370px, #1c2430 1480px, #1c222c 1920px);
}
.weather { width: 326px; display: flex; padding: 0 0 3px 25px; }
.wicon { position: relative; width: 39px; padding-top: 4px; }
.wicon b { position: absolute; left: 14px; top: -2px; width: 20px; height: 20px; border-radius: 50%; background: #ff99a4; color: #111; font: 14px/20px "Noto Sans", sans-serif; text-align: center; }
.weather p { font-size: 14.500px; line-height: 20px; letter-spacing: -.15px; }
.weather em { color: #c5c9d1; }
.apps-row { display: flex; align-items: center; padding-bottom: 1px; }
.app { width: 55px; height: 50px; display: grid; place-items: center; position: relative; }
.app.start { width: 56px; margin-right: 4px; }
.search { width: 275px; height: 40px; margin-right: 2.500px; border-radius: 20px; border: 1px solid #4c5680; background: linear-gradient(90deg, #35446a, #38437a); display: flex; align-items: center; padding-left: 14px; gap: 11px; font-size: 17px; letter-spacing: -.4px; color: #c9cde0; }
.app.open::after { content: ""; position: absolute; left: 23.500px; bottom: 1px; width: 8px; height: 4px; border-radius: 2px; background: #9a9fb0; }
.app.focus::before { content: ""; position: absolute; inset: 0 3px; border-radius: 5px; background: rgba(255, 255, 255, .08); border: 1px solid rgba(255, 255, 255, .08); }
.app.focus svg { position: relative; }
.app.focus::after { content: ""; position: absolute; left: 17px; bottom: 1px; width: 20px; height: 4px; border-radius: 2px; background: #4cc2ff; }
.m365 { position: absolute; left: 22px; top: 31px; width: 21px; height: 9px; border-radius: 2px; background: #000; color: #fff; font: 700 7.500px/9px "Noto Sans", sans-serif; text-align: center; }
.x64 { position: absolute; left: 13px; top: 10px; width: 18px; font: 700 9px/11px "Noto Sans", sans-serif; color: #111; text-align: center; letter-spacing: -.4px; }
.tray { margin-left: auto; padding: 0 25px 3px 0; display: flex; align-items: center; }
.tray > svg, .count { position: relative; top: 1px; }
.tray > :nth-child(2) { margin-left: 22px; }
.tray > :nth-child(3) { margin-left: 19px; }
.tray p { font-size: 14.500px; line-height: 20px; letter-spacing: .2px; }
.tray .lang { width: 36px; margin: 0 19px 0 18px; text-align: center; letter-spacing: 0; }
.lang + svg + svg, .lang + svg + svg + svg { margin-left: 10px; }
.tray .clock { width: 98px; text-align: right; }
.count { width: 20px; height: 20px; margin-left: 9px; border-radius: 50%; background: #4cc2ff; color: #111; font: 14px/20px "Noto Sans", sans-serif; text-align: center; }
```
